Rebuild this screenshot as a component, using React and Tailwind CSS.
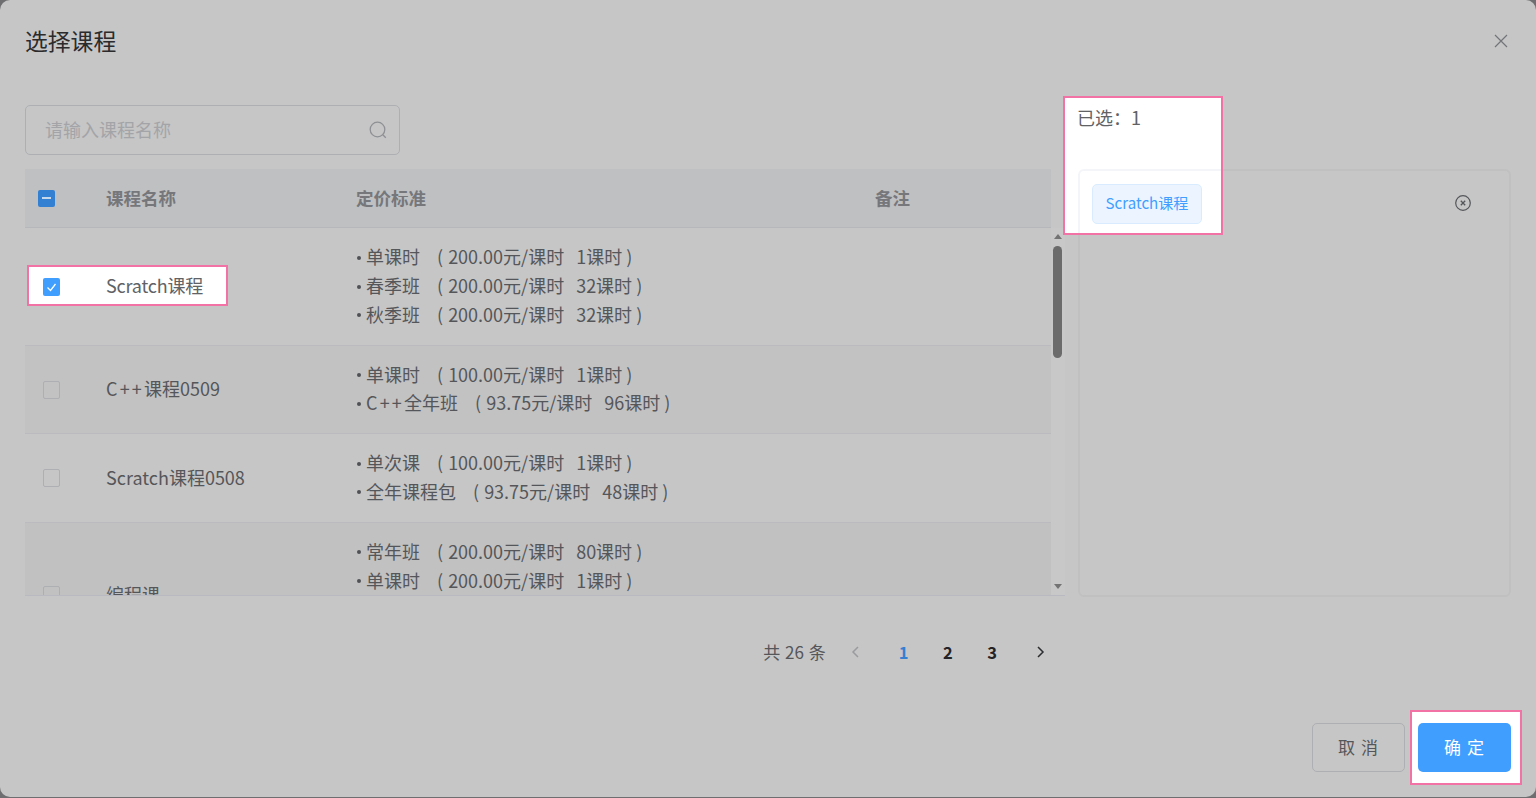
const FONT = "font-['Noto_Sans_CJK_SC','Noto_Sans',sans-serif]";

const rows = [
  {
    h: "h-[118px]",
    name: "Scratch课程",
    checked: true,
    lines: [
      ["单课时", "200.00元/课时", "1课时"],
      ["春季班", "200.00元/课时", "32课时"],
      ["秋季班", "200.00元/课时", "32课时"],
    ],
  },
  {
    h: "h-[88px]",
    bg: "bg-[#c2c2c2]",
    name: "课程0509",
    prefix: "C++",
    lines: [
      ["单课时", "100.00元/课时", "1课时"],
      ["全年班", "93.75元/课时", "96课时", "C++"],
    ],
  },
  {
    h: "h-[89px]",
    name: "Scratch课程0508",
    lines: [
      ["单次课", "100.00元/课时", "1课时"],
      ["全年课程包", "93.75元/课时", "48课时"],
    ],
  },
  {
    h: "h-[145px]",
    bg: "bg-[#c1c1c1]",
    name: "编程课",
    lines: [
      ["常年班", "200.00元/课时", "80课时"],
      ["单课时", "200.00元/课时", "1课时"],
      ["春季班", "200.00元/课时", "32课时"],
      ["秋季班", "200.00元/课时", "32课时"],
    ],
  },
];

function PriceLine({ line }) {
  return (
    <div className="flex h-[28.7px] items-center whitespace-nowrap">
      <span className="ml-[1px] mr-[5px] mt-[2px] h-[4px] w-[4px] rounded-full bg-[#505155]" />
      <span>
        {line[3] ? <span className="tracking-[2.2px]">{line[3]}</span> : null}
        {line[0]}
      </span>
      <span className="ml-[17px]">
        ( <span className="ml-[1px]">{line[1]}</span>
      </span>
      <span className="ml-[12px]">{line[2]} )</span>
    </div>
  );
}

function Row({ row, index }) {
  return (
    <div className={"grid grid-cols-[81px_250px_1fr] border-b border-[#bbbbbf] text-[#55565a] " + row.h + " " + (row.bg || "")}>
      {row.checked ? (
        <div className="col-span-2 flex items-center pb-[2px] pl-[2px]">
          <div className="flex h-[41px] w-[201px] items-center border-2 border-[#f272a6] bg-white pl-[14px] text-[#606266]">
            <span className="mt-[2px] flex h-[18px] w-[17px] items-center justify-center rounded-[2px] bg-[#409eff]">
              <svg viewBox="0 0 17 18" className="h-[18px] w-[17px]" fill="none" stroke="white" strokeWidth="1.3">
                <path d="M4.5 9.5 L7.5 12.5 L12.5 6" />
              </svg>
            </span>
            <span className="ml-[46px] tracking-[-0.2px]">{row.name}</span>
          </div>
        </div>
      ) : (
        <>
          <div className="flex items-center pl-[18px]">
            <span className="block h-[18px] w-[17px] rounded-[2px] border border-[#aeafb3]" />
          </div>
          <div className="flex items-center pb-[2px]">
            <span>
              {row.prefix ? <span className="tracking-[2.2px]">{row.prefix}</span> : null}
              {row.name}
            </span>
          </div>
        </>
      )}
      <div className={"flex flex-col " + (index === 3 ? "pt-[14px]" : "justify-center pb-[2px]")}>
        {row.lines.map((l, i) => (
          <PriceLine key={i} line={l} />
        ))}
      </div>
    </div>
  );
}

export default function App() {
  return (
    <div className={"h-[798px] w-full overflow-hidden bg-[#6e6e70] text-[18px] leading-normal " + FONT}>
      <div className="relative flex h-[797px] flex-col rounded-[10px] bg-[#c6c6c6] px-[25px]">
        <header className="flex h-[105px] items-start justify-between pt-[23px]">
          <h1 className="text-[22.8px] leading-[36px] font-normal text-[#2b2b2d]">选择课程</h1>
          <svg viewBox="0 0 14 14" className="mr-[3px] mt-[11px] h-[14px] w-[14px]" fill="none" stroke="#737478" strokeWidth="1.2">
            <path d="M1 1 L13 13 M13 1 L1 13" />
          </svg>
        </header>

        <div className="flex h-[492px]">
          <section className="flex w-[1040px] flex-col">
            <div className="flex h-[50px] w-[375px] items-center justify-between rounded-[5px] border border-[#aeafb3] pl-[19px] pr-[12px] text-[#a3a4a8]">
              <span className="pb-[2px]">请输入课程名称</span>
              <svg viewBox="0 0 18 18" className="h-[18px] w-[18px]" fill="none" stroke="#8f9094" strokeWidth="1.3">
                <circle cx="8.5" cy="8.5" r="7.3" />
                <path d="M13.8 13.8 L16.8 16.8" />
              </svg>
            </div>

            <div className="mt-[14px] grid h-[59px] w-[1026px] grid-cols-[81px_250px_519px_1fr] border-b border-[#b6b7bb] bg-[#bfc0c2] text-[17.5px] font-bold text-[#76777b]">
              <div className="flex items-center pl-[13px]">
                <span className="flex h-[17px] w-[17px] items-center justify-center rounded-[2px] bg-[#337fd2]">
                  <span className="h-[2px] w-[9px] bg-[#c6d8ec]" />
                </span>
              </div>
              <div className="flex items-center">课程名称</div>
              <div className="flex items-center">定价标准</div>
              <div className="flex items-center">备注</div>
            </div>

            <div className="flex h-[368px] border-b border-[#b9b9c1]">
              <div className="h-full w-[1026px] overflow-hidden">
                {rows.map((r, i) => (
                  <Row key={i} row={r} index={i} />
                ))}
              </div>
              <div className="flex h-full w-[14px] flex-col items-start bg-[#c8c8c8] pl-[2px] pt-[6px]">
                <span className="ml-[1px] h-0 w-0 border-x-[4px] border-b-[5px] border-x-transparent border-b-[#737373]" />
                <span className="mt-[7px] h-[112px] w-[9px] rounded-[5px] bg-[#6b6b6b]" />
                <span className="ml-[1px] mt-auto mb-[6px] h-0 w-0 border-x-[4px] border-t-[5px] border-x-transparent border-t-[#737373]" />
              </div>
            </div>
          </section>

          <aside className="relative flex-1 pl-[13px]">
            <div className="relative mt-[64px] h-[428px] rounded-[6px] border-2 border-[#c0c0c0]">
              <svg viewBox="0 0 16 16" className="absolute right-[38px] top-[24px] h-[16px] w-[16px]" fill="none" stroke="#55565a" strokeWidth="1.2">
                <circle cx="8" cy="8" r="7.3" />
                <path d="M5.8 5.8 L10.2 10.2 M10.2 5.8 L5.8 10.2" strokeWidth="1.3" />
              </svg>
            </div>
            <div className="absolute left-[-2px] top-[-9px] h-[139px] w-[160px] overflow-hidden border-2 border-[#f272a6] bg-white text-[#606266]">
              <div className="pl-[12px] pt-[6px]">已选：1</div>
              <div className="absolute left-[13px] top-[71px] h-[100px] w-[200px] rounded-[6px] border-2 border-[#f4f5f9] pl-[12px] pt-[13px]">
                <span className="flex h-[40px] w-[110px] items-center justify-center rounded-[5px] border border-[#d9ecff] bg-[#ecf5ff] pb-[3px] text-[15.1px] text-[#409eff]">
                  Scratch课程
                </span>
              </div>
            </div>
          </aside>
        </div>

        <nav className="mr-[465px] mt-[39px] flex h-[32px] items-center justify-end text-[#55565a]">
          <span className="mr-[24px] text-[17px] [word-spacing:1px]">共 26 条</span>
          <svg viewBox="0 0 10 14" className="mr-[39px] h-[14px] w-[10px]" fill="none" stroke="#9a9b9f" strokeWidth="1.5">
            <path d="M8 2 L3 7 L8 12" />
          </svg>
          <div className="flex items-center gap-[34.5px] text-[16.5px] font-bold text-[#222326]">
            <span className="text-[#337fd2]">1</span>
            <span>2</span>
            <span>3</span>
          </div>
          <svg viewBox="0 0 10 14" className="ml-[39px] h-[14px] w-[10px]" fill="none" stroke="#2c2d30" strokeWidth="1.5">
            <path d="M2 2 L7 7 L2 12" />
          </svg>
        </nav>

        <footer className="relative mt-[55px] flex justify-end gap-[13px]">
          <button className="h-[49px] w-[93px] rounded-[5px] border border-[#aeafb3] pb-[2px] text-[17px] tracking-[1px] text-[#55565a]">取 消</button>
          <div className="relative">
            <div className="absolute -left-[8px] -top-[13px] h-[75px] w-[112px] border-2 border-[#f272a6] bg-white" />
            <button className="relative h-[49px] w-[93px] rounded-[5px] bg-[#409eff] pb-[2px] text-[17px] tracking-[1px] text-white">确 定</button>
          </div>
        </footer>
      </div>
    </div>
  );
}
